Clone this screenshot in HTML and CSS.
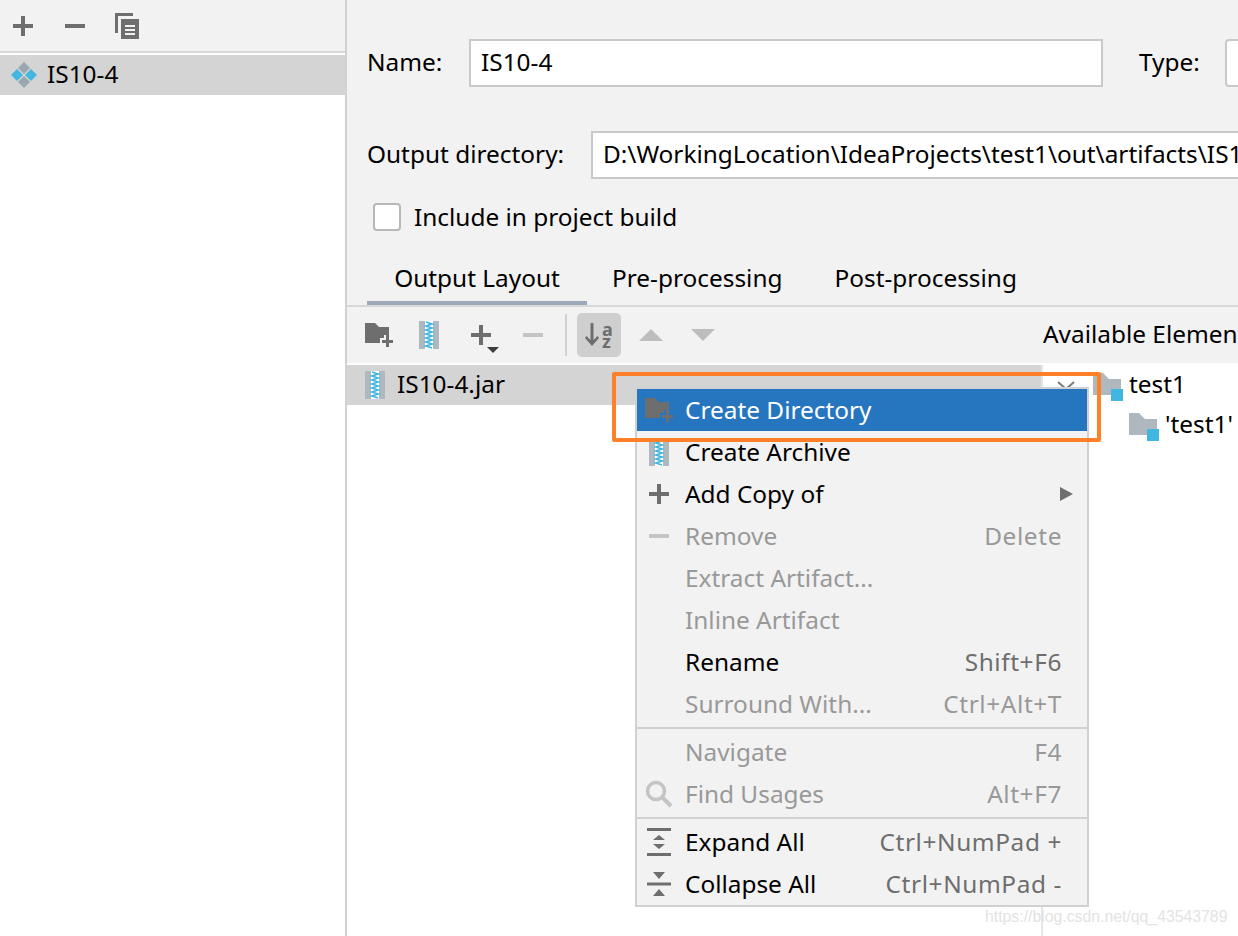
FILE: index.html
```html
<!DOCTYPE html>
<html>
<head>
<meta name="viewport" content="width=device-width, initial-scale=1">
<link rel="stylesheet" href="styles.css">
</head>
<body>

<svg class="defs" width="0" height="0">
  <symbol id="folder-plus" viewBox="0 0 28 24">
    <path d="M0 0h10l4 4h10v8h-5v3h-4v5H0z" fill="currentColor"/>
    <path d="M21 12h3v5h4v3h-4v4h-3v-4h-4v-3h4z" fill="currentColor"/>
  </symbol>
  <symbol id="zip" viewBox="0 0 20 28">
    <rect width="20" height="28" fill="#afb8bf"/>
    <rect x="6" width="8" height="28" fill="#fff"/>
    <path d="M7 1l6 2-6 2 6 2-6 2 6 2-6 2 6 2-6 2 6 2-6 2 6 2-6 2 6 2" fill="none" stroke="#40b6e0" stroke-width="1.800"/>
  </symbol>
  <symbol id="plus" viewBox="0 0 20 20">
    <path d="M8 0h4v8h8v4h-8v8H8v-8H0V8h8z" fill="currentColor"/>
  </symbol>
  <symbol id="minus" viewBox="0 0 20 20">
    <rect y="8" width="20" height="4" fill="currentColor"/>
  </symbol>
</svg>

<div class="app">

  <div class="sidebar">
    <div class="side-tools">
      <span class="side-btn side-add"><svg class="ico-20"><use href="#plus"/></svg></span>
      <span class="side-btn side-remove"><svg class="ico-20"><use href="#minus"/></svg></span>
      <span class="side-btn side-copy">
        <svg width="24" height="26" viewBox="0 0 24 26">
          <path d="M0 0h18v3H3v17H0z" fill="#6e6e6e"/>
          <path d="M6 6h18v20H6z" fill="#6e6e6e"/>
          <path d="M10 12h10v2H10zM10 16h10v2H10zM10 20h10v2H10z" fill="#f2f2f2"/>
        </svg>
      </span>
    </div>
    <div class="side-row">
      <svg class="artifact-ico" width="28" height="28" viewBox="0 0 28 28">
        <path d="M14 1l6 6-6 6-6-6z" fill="#9aa7b0"/>
        <path d="M14 15l6 6-6 6-6-6z" fill="#9aa7b0"/>
        <path d="M7 8l6 6-6 6-6-6z" fill="#40b6e0"/>
        <path d="M21 8l6 6-6 6-6-6z" fill="#40b6e0"/>
      </svg>
      <span class="text-up">IS10-4</span>
    </div>
  </div>

  <div class="main">
    <div class="form">
      <div class="name-line">
        <label class="lbl-name">Name:</label>
        <div class="field field-name">IS10-4</div>
        <label class="lbl-type">Type:</label>
        <div class="field field-type"></div>
      </div>
      <div class="dir-line">
        <label class="lbl-dir">Output directory:</label>
        <div class="field field-dir">D:\WorkingLocation\IdeaProjects\test1\out\artifacts\IS10_4</div>
      </div>
      <div class="check-line">
        <span class="checkbox"></span>
        <span>Include in project build</span>
      </div>
      <div class="tabs">
        <div class="tab tab-on">Output Layout</div>
        <div class="tab tab-pre">Pre-processing</div>
        <div class="tab tab-post">Post-processing</div>
      </div>
    </div>

    <div class="toolbar">
      <span class="tool t1"><svg width="28" height="24"><use href="#folder-plus"/></svg></span>
      <span class="tool t2"><svg width="20" height="28"><use href="#zip"/></svg></span>
      <span class="tool t3">
        <svg class="ico-20"><use href="#plus"/></svg>
        <svg class="mini-arrow" width="12" height="6" viewBox="0 0 12 6"><path d="M0 0h12L6 6z" fill="#3c3c3c"/></svg>
      </span>
      <span class="tool t4 off"><svg class="ico-20"><use href="#minus"/></svg></span>
      <span class="tool-sep"></span>
      <span class="tool-sort">
        <svg width="14" height="28" viewBox="0 0 14 28">
          <path d="M5.500 2h3v17l4-4 1.500 2-7 8-7-8 1.500-2 4 4z" fill="#6e6e6e"/>
        </svg>
        <span class="sort-letters"><span>a</span><span>z</span></span>
      </span>
      <span class="tool t6"><svg width="24" height="12" viewBox="0 0 24 12"><path d="M12 0l12 12H0z" fill="#bdbdbd"/></svg></span>
      <span class="tool t7"><svg width="24" height="12" viewBox="0 0 24 12"><path d="M0 0h24L12 12z" fill="#bdbdbd"/></svg></span>
      <span class="avail">Available Elements</span>
    </div>

    <div class="panes">
      <div class="layout-pane">
        <div class="jar-row">
          <svg width="20" height="28"><use href="#zip"/></svg>
          <span class="text-up">IS10-4.jar</span>
        </div>
      </div>
      <div class="elements-pane">
        <div class="tree-row">
          <svg class="chevron" width="18" height="9" viewBox="0 0 18 9"><path d="M1 1l8 7 8-7" fill="none" stroke="#7a7a7a" stroke-width="2"/></svg>
          <svg class="tree-folder" width="30" height="28" viewBox="0 0 30 28">
            <path d="M0 0h10l6 6h12v16H0z" fill="#afb8bf"/>
            <rect x="18" y="16" width="12" height="12" fill="#40b6e0"/>
          </svg>
          <span class="text-up">test1</span>
        </div>
        <div class="tree-row tree-sub">
          <svg class="tree-folder" width="30" height="28" viewBox="0 0 30 28">
            <path d="M0 0h10l6 6h12v16H0z" fill="#afb8bf"/>
            <rect x="18" y="16" width="12" height="12" fill="#40b6e0"/>
          </svg>
          <span class="text-up">'test1'</span>
        </div>
      </div>
    </div>
  </div>
</div>

<div class="menu">
  <div class="item active">
    <span class="item-ico"><svg width="28" height="24"><use href="#folder-plus"/></svg></span>
    <span class="item-text">Create Directory</span>
  </div>
  <div class="item">
    <span class="item-ico"><svg width="20" height="28"><use href="#zip"/></svg></span>
    <span class="item-text">Create Archive</span>
  </div>
  <div class="item">
    <span class="item-ico"><svg class="ico-20"><use href="#plus"/></svg></span>
    <span class="item-text">Add Copy of</span>
    <svg class="sub-arrow" width="13" height="14" viewBox="0 0 13 14"><path d="M0 0l13 7-13 7z" fill="#6e6e6e"/></svg>
  </div>
  <div class="item off">
    <span class="item-ico"><svg class="ico-20"><use href="#minus"/></svg></span>
    <span class="item-text">Remove</span>
    <span class="keys">Delete</span>
  </div>
  <div class="item off">
    <span class="item-ico"></span>
    <span class="item-text">Extract Artifact...</span>
  </div>
  <div class="item off">
    <span class="item-ico"></span>
    <span class="item-text">Inline Artifact</span>
  </div>
  <div class="item">
    <span class="item-ico"></span>
    <span class="item-text">Rename</span>
    <span class="keys">Shift+F6</span>
  </div>
  <div class="item off">
    <span class="item-ico"></span>
    <span class="item-text">Surround With...</span>
    <span class="keys">Ctrl+Alt+T</span>
  </div>
  <div class="menu-sep"></div>
  <div class="item off">
    <span class="item-ico"></span>
    <span class="item-text">Navigate</span>
    <span class="keys">F4</span>
  </div>
  <div class="item off">
    <span class="item-ico">
      <svg width="28" height="28" viewBox="0 0 28 28"><circle cx="11" cy="11" r="8.500" fill="none" stroke="#c4c4c4" stroke-width="3.500"/><path d="M17 17l9 9" stroke="#c4c4c4" stroke-width="4"/></svg>
    </span>
    <span class="item-text">Find Usages</span>
    <span class="keys">Alt+F7</span>
  </div>
  <div class="menu-sep"></div>
  <div class="item">
    <span class="item-ico">
      <svg width="24" height="28" viewBox="0 0 24 28"><path d="M0 0h24v3H0zM0 25h24v3H0z" fill="#6e6e6e"/><path d="M12 7l6 5H6zM6 16h12l-6 5z" fill="#6e6e6e"/></svg>
    </span>
    <span class="item-text">Expand All</span>
    <span class="keys">Ctrl+NumPad +</span>
  </div>
  <div class="item">
    <span class="item-ico">
      <svg width="24" height="24" viewBox="0 0 24 24"><path d="M6 0h12l-6 7zM0 10.500h24v3H0zM12 17l6 7H6z" fill="#6e6e6e"/></svg>
    </span>
    <span class="item-text">Collapse All</span>
    <span class="keys">Ctrl+NumPad -</span>
  </div>
</div>

<div class="highlight"></div>
<div class="watermark">https://blog.csdn.net/qq_43543789</div>

</body>
</html>
```

FILE: styles.css
```css
html, body {
  margin: 0;
  height: 936px;
  overflow: hidden;
  background-color: #fff;
}

body {
  position: relative;
  font-family: "Noto Sans", sans-serif;
  font-size: 24.4px;
  line-height: 34px;
  color: #000;
}

.defs {
  position: absolute;
}

.ico-20 {
  width: 20px;
  height: 20px;
}

.text-up {
  margin-bottom: 3px;
}

.app {
  display: flex;
  height: 936px;
}

/* left list */

.sidebar {
  width: 345px;
  flex: none;
  border-right: 2px solid #d1d1d1;
}

.side-tools {
  display: flex;
  align-items: center;
  height: 51px;
  background-color: #f2f2f2;
  border-bottom: 2px solid #d8d8d8;
  color: #6e6e6e;
}

.side-btn {
  display: flex;
  justify-content: center;
}

.side-add { width: 46px; }
.side-remove { width: 58px; }
.side-copy { width: 46px; }

.side-row {
  display: flex;
  align-items: center;
  height: 40px;
  margin-top: 2px;
  padding-left: 10px;
  background-color: #d4d4d4;
}

.artifact-ico {
  margin-right: 9px;
}

/* form */

.main {
  flex: 1;
  min-width: 0;
  display: flex;
  flex-direction: column;
}

.form {
  height: 307px;
  box-sizing: border-box;
  background-color: #f2f2f2;
  border-bottom: 2px solid #d8d8d8;
  overflow: hidden;
}

.field {
  box-sizing: border-box;
  height: 48px;
  line-height: 41px;
  padding-left: 10px;
  background-color: #fff;
  border: 2px solid #c9c9c9;
  white-space: nowrap;
  overflow: hidden;
}

.name-line {
  display: flex;
  align-items: center;
  height: 48px;
  margin-top: 39px;
  margin-left: 20px;
}

.lbl-name { width: 102px; flex: none; margin-bottom: 3px; }
.field-name { width: 634px; flex: none; }
.lbl-type { margin-left: 36px; width: 86px; flex: none; margin-bottom: 3px; }
.field-type { width: 60px; flex: none; border-radius: 4px 0 0 4px; }

.dir-line {
  display: flex;
  align-items: center;
  margin-top: 44px;
  margin-left: 20px;
}

.lbl-dir { width: 224px; flex: none; margin-bottom: 3px; }
.field-dir { flex: 1; border-right: 0; }

.check-line {
  display: flex;
  align-items: center;
  margin-top: 21px;
  margin-left: 26px;
}

.checkbox {
  box-sizing: border-box;
  width: 28px;
  height: 28px;
  margin-right: 13px;
  background-color: #fff;
  border: 2px solid #b8b8b8;
  border-radius: 4px;
}

.tabs {
  display: flex;
  height: 48px;
  margin-top: 24px;
  margin-left: 20px;
}

.tab {
  line-height: 40px;
  text-align: center;
}

.tab-on {
  width: 220px;
  height: 48px;
  box-sizing: border-box;
  border-bottom: 5px solid #9ca7b8;
}

.tab-pre { margin-left: 25px; }
.tab-post { margin-left: 52px; }

/* toolbar */

.toolbar {
  display: flex;
  align-items: center;
  height: 56px;
  padding-left: 6px;
  background-color: #f2f2f2;
  color: #6e6e6e;
  white-space: nowrap;
  overflow: hidden;
}

.tool {
  display: flex;
  justify-content: center;
  align-items: center;
  flex: none;
  position: relative;
}

.t1 { width: 52px; }
.t2 { width: 48px; }
.t3 { width: 56px; }
.t4 { width: 48px; }
.t6 { width: 60px; }
.t7 { width: 44px; }
.off { color: #c4c4c4; }

.mini-arrow {
  position: absolute;
  left: 34px;
  top: 22px;
}

.tool-sep {
  flex: none;
  width: 2px;
  height: 42px;
  margin: 0 10px 0 8px;
  background-color: #d1d1d1;
}

.tool-sort {
  display: flex;
  align-items: center;
  flex: none;
  box-sizing: border-box;
  width: 44px;
  height: 44px;
  padding-left: 8px;
  gap: 3px;
  border-radius: 5px;
  background-color: #cfcfcf;
}

.sort-letters {
  display: flex;
  flex-direction: column;
  font-size: 18px;
  line-height: 12px;
  font-weight: 700;
  color: #6e6e6e;
}

.avail {
  flex: none;
  margin-left: 318px;
  margin-bottom: 3px;
  color: #000;
}

/* trees under the toolbar */

.panes {
  flex: 1;
  display: flex;
  margin-top: 2px;
}

.layout-pane {
  width: 694px;
  flex: none;
  border-right: 2px solid #e6e6e6;
}

.jar-row {
  display: flex;
  align-items: center;
  gap: 12px;
  height: 40px;
  padding-left: 18px;
  background-color: #d4d4d4;
}

.elements-pane {
  flex: 1;
  white-space: nowrap;
  overflow: hidden;
}

.tree-row {
  display: flex;
  align-items: center;
  height: 40px;
  padding-left: 14px;
}

.chevron {
  margin-right: 18px;
}

.tree-folder {
  flex: none;
  margin-top: 4px;
  margin-right: 6px;
}

.tree-sub {
  padding-left: 86px;
}

/* popup */

.menu {
  position: absolute;
  left: 635px;
  top: 387px;
  width: 454px;
  box-sizing: border-box;
  background-color: #f2f2f2;
  border: 2px solid #d1d1d1;
}

.item {
  display: flex;
  align-items: center;
  height: 42px;
  padding-right: 25px;
}

.item-ico {
  display: flex;
  justify-content: center;
  align-items: center;
  flex: none;
  width: 44px;
  margin-right: 4px;
  color: #6e6e6e;
}

.item-text {
  flex: 1;
}

.keys {
  color: #6e6e6e;
  letter-spacing: 0.6px;
}

.sub-arrow {
  margin-right: -11px;
}

.item.active {
  background-color: #2675bf;
  color: #fff;
}

.item.off,
.item.off .keys {
  color: #999;
}

.item.off .item-ico {
  color: #c4c4c4;
}

.menu-sep {
  height: 2px;
  margin: 2px 0;
  background-color: #d1d1d1;
}

.highlight {
  position: absolute;
  left: 612px;
  top: 372px;
  width: 489px;
  height: 70px;
  box-sizing: border-box;
  border: 4px solid #ff8029;
  border-radius: 2px;
}

.watermark {
  position: absolute;
  left: 985px;
  top: 908px;
  font-family: "Liberation Sans", sans-serif;
  font-size: 15.800px;
  line-height: 18px;
  color: #e3e3e3;
}
```
